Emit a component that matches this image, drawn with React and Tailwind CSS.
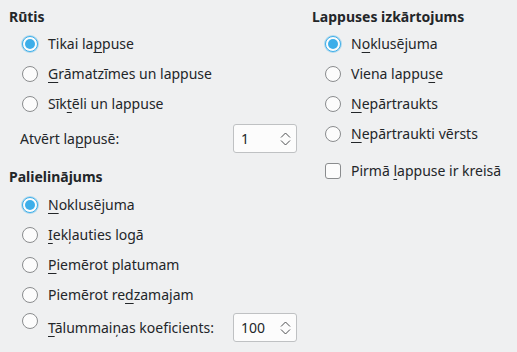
import React from "react";

function Radio({ checked }) {
  return checked ? (
    <span className="flex h-4 w-4 shrink-0 items-center justify-center rounded-full border border-[#3daee9] bg-[#fcfcfc] shadow-[0_0_0_1px_rgba(61,174,233,0.35)]">
      <span className="h-[10px] w-[10px] rounded-full bg-[#3daee9]" />
    </span>
  ) : (
    <span className="block h-4 w-4 shrink-0 rounded-full border border-[#8a8c8e] bg-[#fcfcfc]" />
  );
}

function U({ children }) {
  return <span className="underline decoration-1 underline-offset-[3px]">{children}</span>;
}

function RadioRow({ checked, children }) {
  return (
    <div className="flex h-[30px] items-center gap-[10px] pl-[13px]">
      <Radio checked={checked} />
      <span>{children}</span>
    </div>
  );
}

function Spin({ value }) {
  return (
    <div className="flex h-[29px] w-[64px] shrink-0 items-center justify-between rounded-[3px] border border-[#bfc1c3] bg-[#fcfcfc] pl-[7px] pr-[5px]">
      <span>{value}</span>
      <svg width="11" height="16" viewBox="0 0 11 16" fill="none" stroke="#4d4f51" strokeWidth="1">
        <path d="M1 6.5 L5.5 2 L10 6.5" />
        <path d="M1 9.5 L5.5 14 L10 9.5" />
      </svg>
    </div>
  );
}

export default function App() {
  return (
    <div
      className="flex h-[352px] w-[517px] bg-[#eff0f1] text-[14px] leading-5 text-[#232629]"
      style={{ fontFamily: '"Noto Sans", "DejaVu Sans", sans-serif' }}
    >
      <div className="flex w-[303px] flex-col pl-[9px] pr-[6px] pt-[7px]">
        <div className="h-5 font-bold">Rūtis</div>
        <div className="mt-[2px]">
          <RadioRow checked>
            Tikai la<U>p</U>puse
          </RadioRow>
          <RadioRow>
            <U>G</U>rāmatzīmes un lappuse
          </RadioRow>
          <RadioRow>
            Sīk<U>t</U>ēli un lappuse
          </RadioRow>
        </div>
        <div className="mt-[5px] flex items-center pl-[11px]">
          <span>
            Atvērt la<U>p</U>pusē:
          </span>
          <div className="ml-auto">
            <Spin value="1" />
          </div>
        </div>
        <div className="mt-[14px] h-5 font-bold">Palielinājums</div>
        <div className="mt-[3px]">
          <RadioRow checked>
            <U>N</U>oklusējuma
          </RadioRow>
          <RadioRow>
            <U>I</U>ekļauties logā
          </RadioRow>
          <RadioRow>
            <U>P</U>iemērot platumam
          </RadioRow>
          <RadioRow>
            Piemērot re<U>d</U>zamajam
          </RadioRow>
        </div>
        <div className="mt-[3px] flex items-center pl-[13px]">
          <div className="flex h-[29px] items-center gap-[10px]">
            <div className="flex self-start">
              <Radio />
            </div>
            <span>
              <U>T</U>ālummaiņas koeficients:
            </span>
          </div>
          <div className="ml-auto">
            <Spin value="100" />
          </div>
        </div>
      </div>
      <div className="ml-[9px] flex flex-1 flex-col pt-[7px]">
        <div className="h-5 font-bold">Lappuses izkārtojums</div>
        <div className="mt-[2px]">
          <RadioRow checked>
            N<U>o</U>klusējuma
          </RadioRow>
          <RadioRow>
            Viena lappu<U>s</U>e
          </RadioRow>
          <RadioRow>
            <U>N</U>epārtraukts
          </RadioRow>
          <RadioRow>
            <U>N</U>epārtraukti vērsts
          </RadioRow>
        </div>
        <div className="mt-[7px] flex h-[30px] items-center gap-[10px] pl-[13px]">
          <span className="h-4 w-4 shrink-0 rounded-[3px] border border-[#8a8c8e] bg-[#fcfcfc]" />
          <span>
            Pirmā <U>l</U>appuse ir kreisā
          </span>
        </div>
      </div>
    </div>
  );
}
